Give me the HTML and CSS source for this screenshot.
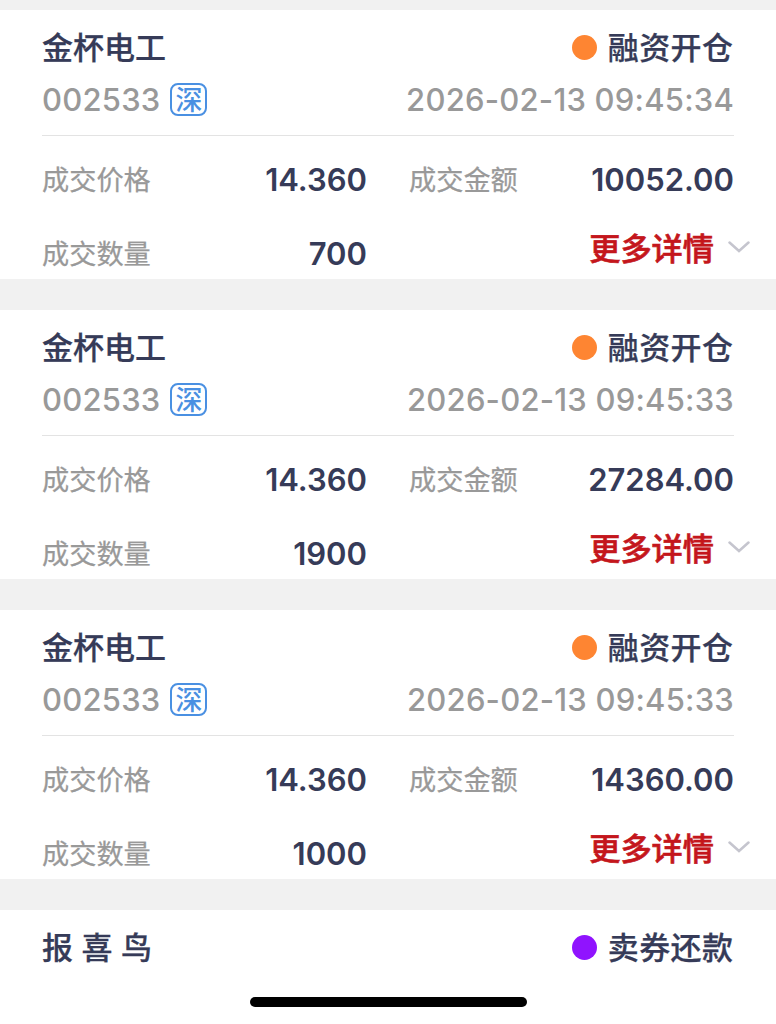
FILE: index.html
```html
<!DOCTYPE html>
<html lang="zh-CN">
<head>
<meta charset="utf-8">
<title>成交记录</title>
<link rel="stylesheet" href="styles.css">
</head>
<body>
<main class="list">
  <article class="card">
    <div class="row head"><span class="name">金杯电工</span><span class="type"><i class="dot"></i><span class="kind">融资开仓</span></span></div>
    <div class="row sub"><span class="code">002533<b class="tag">深</b></span><time class="time">2026-02-13 09:45:34</time></div>
    <div class="grid">
      <div class="cell"><span class="label">成交价格</span><span class="value">14.360</span></div>
      <div class="cell"><span class="label">成交金额</span><span class="value">10052.00</span></div>
      <div class="cell"><span class="label">成交数量</span><span class="value">700</span></div>
      <a class="more"><span class="link">更多详情</span><svg class="chev" viewBox="0 0 22 12"><path d="M1.5 1.5 11 10 20.5 1.5"/></svg></a>
    </div>
  </article>
  <article class="card">
    <div class="row head"><span class="name">金杯电工</span><span class="type"><i class="dot"></i><span class="kind">融资开仓</span></span></div>
    <div class="row sub"><span class="code">002533<b class="tag">深</b></span><time class="time">2026-02-13 09:45:33</time></div>
    <div class="grid">
      <div class="cell"><span class="label">成交价格</span><span class="value">14.360</span></div>
      <div class="cell"><span class="label">成交金额</span><span class="value">27284.00</span></div>
      <div class="cell"><span class="label">成交数量</span><span class="value">1900</span></div>
      <a class="more"><span class="link">更多详情</span><svg class="chev" viewBox="0 0 22 12"><path d="M1.5 1.5 11 10 20.5 1.5"/></svg></a>
    </div>
  </article>
  <article class="card">
    <div class="row head"><span class="name">金杯电工</span><span class="type"><i class="dot"></i><span class="kind">融资开仓</span></span></div>
    <div class="row sub"><span class="code">002533<b class="tag">深</b></span><time class="time">2026-02-13 09:45:33</time></div>
    <div class="grid">
      <div class="cell"><span class="label">成交价格</span><span class="value">14.360</span></div>
      <div class="cell"><span class="label">成交金额</span><span class="value">14360.00</span></div>
      <div class="cell"><span class="label">成交数量</span><span class="value">1000</span></div>
      <a class="more"><span class="link">更多详情</span><svg class="chev" viewBox="0 0 22 12"><path d="M1.5 1.5 11 10 20.5 1.5"/></svg></a>
    </div>
  </article>
  <article class="card last">
    <div class="row head"><span class="name spaced">报喜鸟</span><span class="type"><i class="dot repay"></i><span class="kind">卖券还款</span></span></div>
  </article>
</main>
<div class="home"></div>
</body>
</html>
```
FILE: styles.css
```css
* { box-sizing: border-box; }
body { margin: 0; height: 1024px; overflow: hidden; position: relative; background: #f1f1f1; color: #363b58; font-family: Inter, "Noto Sans CJK SC", sans-serif; }
.list { display: flex; flex-direction: column; gap: 31px; padding-top: 10px; }
.card { height: 269px; background: #fff; padding: 10px 42px 0; }
.last { height: 114px; }
.row { display: flex; justify-content: space-between; align-items: center; white-space: nowrap; }
.head { height: 55px; font-size: 31px; font-weight: 500; }
.name, .kind { padding-bottom: 5px; -webkit-text-stroke: .25px currentColor; }
.type { display: flex; align-items: center; }
.kind { letter-spacing: .4px; margin-right: .6px; }
.dot { width: 25px; height: 25px; margin-right: 11px; border-radius: 50%; background: #fe8532; }
.repay { background: #9013fe; }
.spaced { letter-spacing: 8.5px; }
.sub { height: 61px; border-bottom: 1px solid #e3e3e3; padding-bottom: 11px; color: #999; font-size: 31px; font-weight: 500; letter-spacing: .22px; }
.code { display: flex; align-items: center; gap: 10px; }
.tag { display: flex; justify-content: center; width: 37px; height: 33px; border: 2px solid #4a90e2; border-radius: 8px; color: #4a90e2; font-family: "Noto Sans CJK SC", sans-serif; font-size: 27px; line-height: 27px; font-weight: 500; letter-spacing: 0; }
.grid { display: grid; grid-template-columns: 325px 325px; column-gap: 42px; grid-template-rows: 87px 61px; }
.cell { display: flex; justify-content: space-between; align-items: center; white-space: nowrap; }
.label { padding-bottom: 4px; font-size: 27.2px; color: #999; -webkit-text-stroke: .25px currentColor; }
.value { font-size: 31px; font-weight: 600; }
.more { display: flex; justify-content: flex-end; align-items: center; height: 48px; margin-right: -16px; color: #c4161c; font-size: 31.2px; font-weight: 500; white-space: nowrap; }
.link { padding-bottom: 2px; -webkit-text-stroke: .65px currentColor; }
.chev { width: 22px; height: 12px; margin-left: 14px; fill: none; stroke: #c5c5ce; stroke-width: 2.5; stroke-linecap: round; }
.home { position: absolute; left: 250px; top: 997px; width: 277px; height: 10px; border-radius: 5px; background: #000; }
```
